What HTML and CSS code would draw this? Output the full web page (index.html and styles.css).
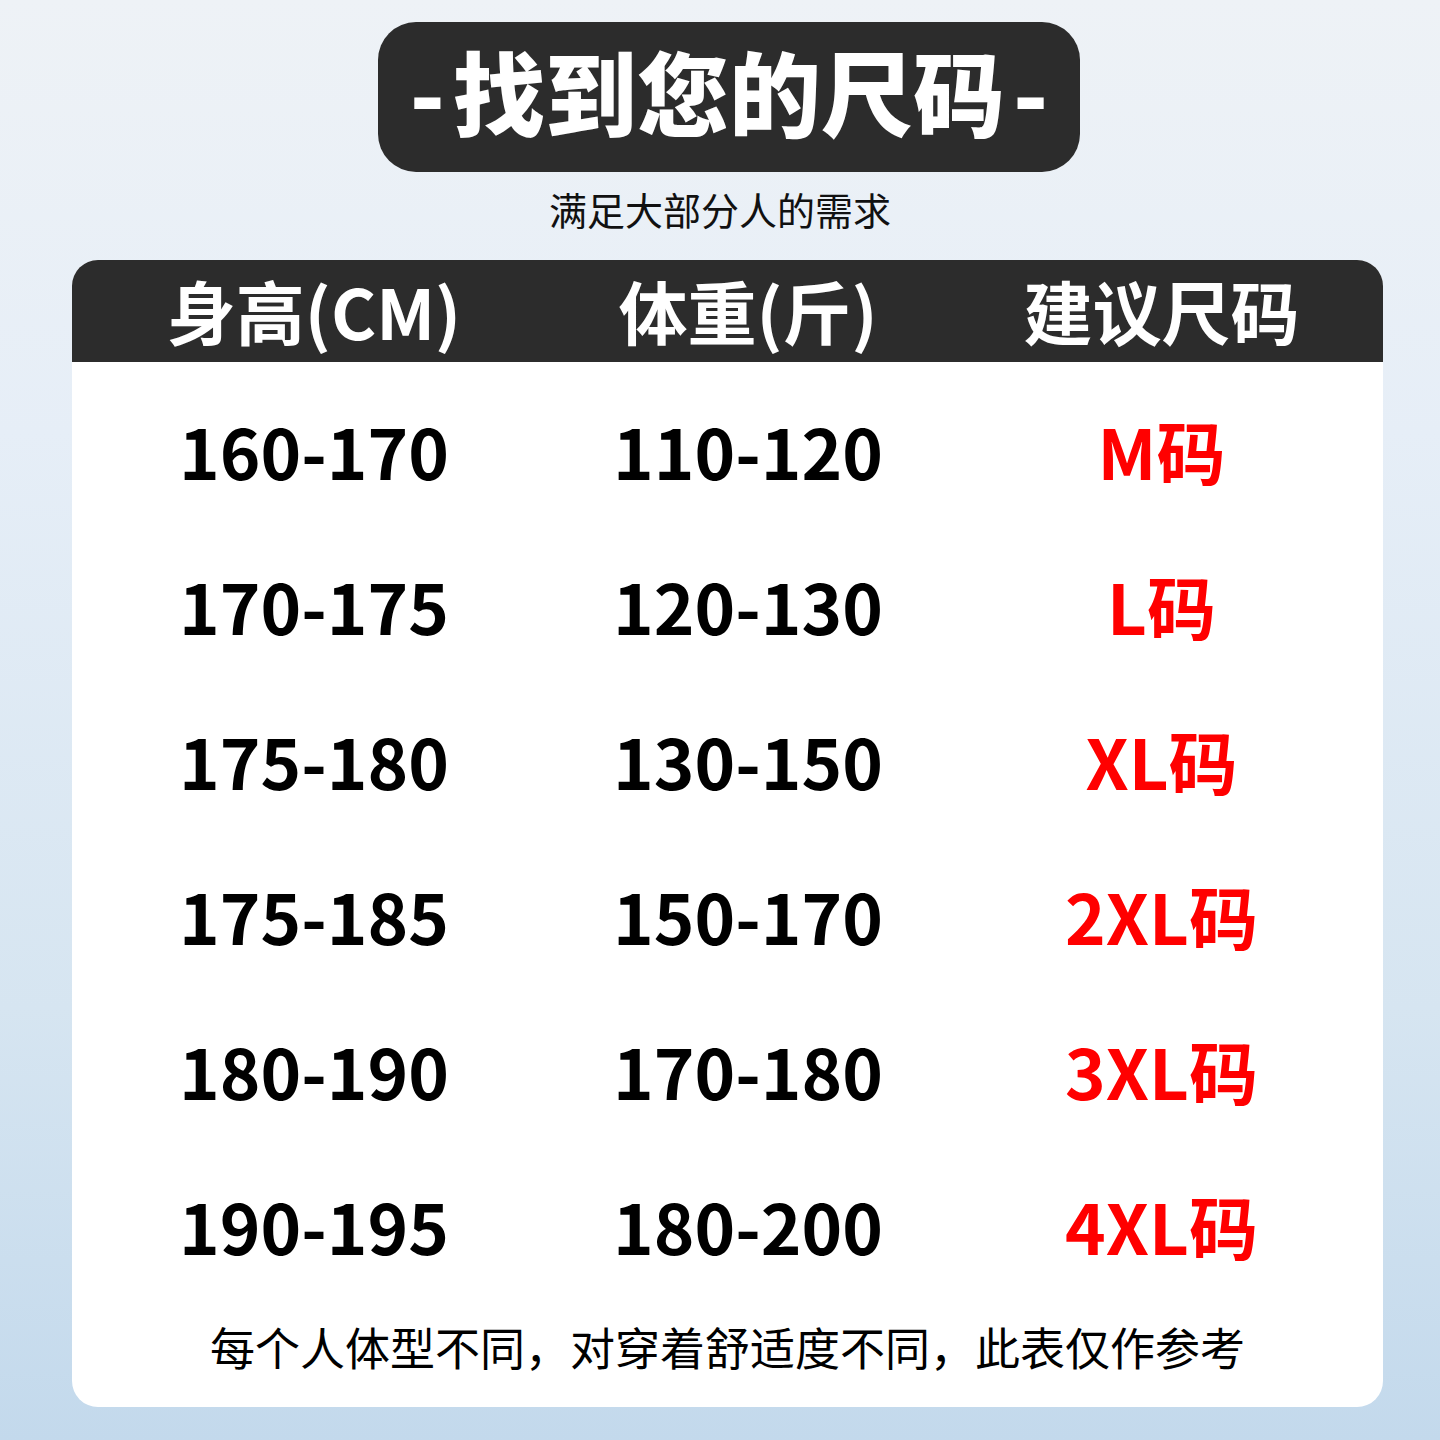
FILE: index.html
```html
<!DOCTYPE html>
<html lang="zh">
<head>
<meta charset="utf-8">
<link rel="stylesheet" href="styles.css">
</head>
<body>
<div class="page">
  <div class="title-box"><span class="title"><span class="dash">-</span>找到您的尺码<span class="dash">-</span></span></div>
  <div class="subtitle">满足大部分人的需求</div>
  <div class="card">
    <div class="head">
      <div class="c1">身高(CM)</div>
      <div class="c2">体重(斤)</div>
      <div class="c3">建议尺码</div>
    </div>
    <div class="row"><div class="c1">160-170</div><div class="c2">110-120</div><div class="c3 red">M码</div></div>
    <div class="row"><div class="c1">170-175</div><div class="c2">120-130</div><div class="c3 red">L码</div></div>
    <div class="row"><div class="c1">175-180</div><div class="c2">130-150</div><div class="c3 red">XL码</div></div>
    <div class="row"><div class="c1">175-185</div><div class="c2">150-170</div><div class="c3 red">2XL码</div></div>
    <div class="row"><div class="c1">180-190</div><div class="c2">170-180</div><div class="c3 red">3XL码</div></div>
    <div class="row"><div class="c1">190-195</div><div class="c2">180-200</div><div class="c3 red">4XL码</div></div>
    <div class="note">每个人体型不同，对穿着舒适度不同，此表仅作参考</div>
  </div>
</div>
</body>
</html>
```
FILE: styles.css
```css
* { box-sizing: border-box; }
html, body { margin: 0; padding: 0; }
body {
  width: 1440px;
  height: 1440px;
  background: linear-gradient(180deg, #eef2f6 0%, #e6eef7 30%, #d6e5f1 70%, #c3d9ec 100%);
  font-family: "Noto Sans CJK SC", "Noto Sans", sans-serif;
  color: #000;
}
.page {
  display: flex;
  flex-direction: column;
  padding: 22px 0 0 72px;
}
.title-box {
  margin-left: 306px;
  width: 702px;
  height: 150px;
  background: #2c2c2c;
  border-radius: 38px;
  display: flex;
  align-items: center;
  justify-content: center;
  padding-bottom: 14px;
}
.title {
  color: #fff;
  font-size: 92px;
  font-weight: 900;
  line-height: 1.2;
  white-space: nowrap;
}
.dash { margin: 0 8px; }
.subtitle {
  width: 1296px;
  text-align: center;
  font-size: 38px;
  line-height: 40px;
  margin-top: 17px;
  color: #111;
}
.card {
  margin-top: 31px;
  width: 1311px;
  height: 1147px;
  background: #fff;
  border-radius: 26px;
  overflow: hidden;
  display: flex;
  flex-direction: column;
}
.head, .row {
  display: grid;
  grid-template-columns: 484px 384px 443px;
  align-items: center;
  text-align: center;
}
.head {
  height: 102px;
  background: #2c2c2c;
  color: #fff;
  font-size: 69px;
  font-weight: 700;
  line-height: 100px;
  align-items: start;
}
.row {
  height: 155px;
  font-size: 69px;
  font-weight: 700;
  line-height: 1.2;
}
.head + .row { margin-top: 11px; }
.red { color: #ff0000; }
.note {
  margin-top: 17px;
  text-align: center;
  font-size: 45px;
  line-height: 1.2;
  color: #000;
}
```
